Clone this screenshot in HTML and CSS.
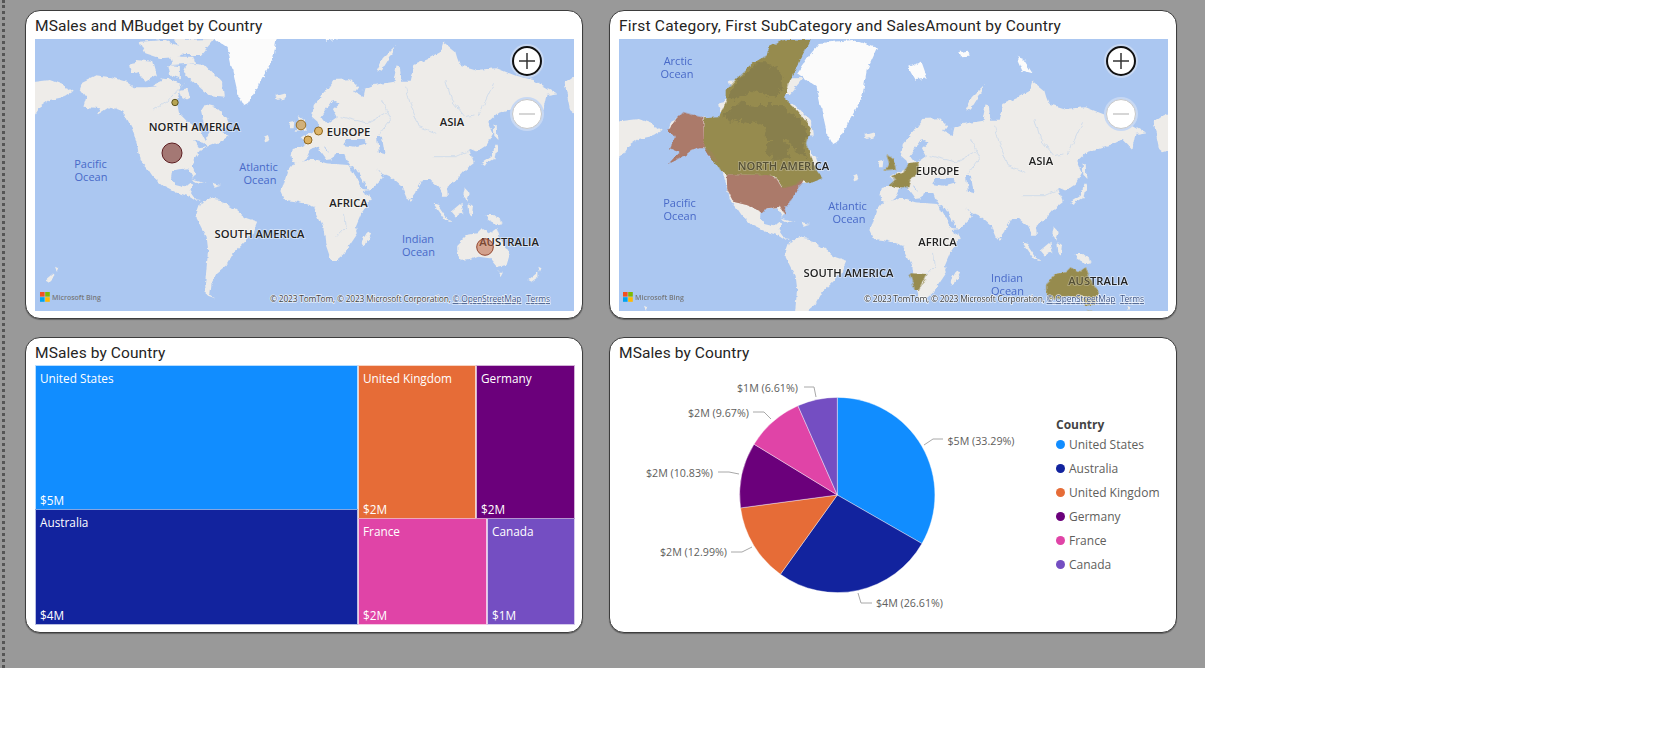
FILE: index.html
```html
<!DOCTYPE html>
<html lang="en">
<head>
<meta charset="utf-8">
<title>Sales report</title>
<link rel="stylesheet" href="styles.css">
</head>
<body>
<svg class="defs" width="0" height="0" aria-hidden="true">
  <defs>
    <filter id="rough" x="-5%" y="-5%" width="110%" height="110%">
      <feTurbulence type="fractalNoise" baseFrequency=".14" numOctaves="3" seed="4" result="n"/>
      <feDisplacementMap in="SourceGraphic" in2="n" scale="5" xChannelSelector="R" yChannelSelector="G"/>
      <feGaussianBlur stdDeviation=".5"/>
    </filter>
    <filter id="terrain" x="-5%" y="-5%" width="110%" height="110%">
      <feTurbulence type="fractalNoise" baseFrequency=".05" numOctaves="3" seed="9" result="n"/>
      <feDisplacementMap in="SourceGraphic" in2="n" scale="30" xChannelSelector="R" yChannelSelector="G"/>
      <feGaussianBlur stdDeviation="2"/>
    </filter>
    <g id="world" class="land">
      <g transform="scale(.38265 .33333)">
        <path d="M60,250 L130,240 L165,255 L190,275 L170,290 L130,300 L105,320 L91,345 L60,370Z"/>
        <path d="M1530,215 L1500,230 L1476,250 L1481,280 L1490,330 L1500,340 L1530,330Z"/>
        <path d="M118,840 L139,820 L139,830 L126,845Z M144,800 L152,805 L148,815Z"/>
        <path d="M215,245 L250,226 L290,232 L330,245 L350,262 L385,262 L420,258 L450,265 L468,280 L462,305 L468,340 L490,365 L520,385 L535,420 L548,395 L532,365 L525,330 L535,312 L565,322 L592,352 L600,378 L572,392 L598,408 L575,425 L548,438 L525,450 L510,475 L503,500 L512,528 L503,530 L492,505 L468,508 L450,512 L447,535 L458,555 L482,562 L498,545 L505,555 L495,572 L510,598 L525,600 L515,605 L495,590 L462,578 L430,560 L400,530 L385,505 L365,480 L357,430 L345,385 L322,335 L287,320 L253,345 L262,325 L218,320 L226,290 L209,265Z"/>
        <path d="M400,255 L440,235 L470,250 L468,280 L420,270Z M470,270 L490,265 L495,290 L478,300Z"/>
        <path d="M490,190 L535,195 L580,250 L585,290 L545,285 L500,240 L480,215Z"/>
        <path d="M355,180 L400,185 L410,225 L380,245 L360,215Z"/>
        <path d="M365,125 L430,120 L490,150 L470,170 L420,175 L380,160Z"/>
        <path d="M455,120 L560,117 L525,165 L480,165Z M445,170 L505,170 L510,190 L450,195Z M340,190 L358,185 L362,215 L345,222Z"/>
        <path d="M440,195 L470,198 L470,235 L445,225Z M418,235 L450,240 L440,250Z M410,150 L440,165 L420,175Z"/>
        <path d="M500,535 L540,548 L520,548Z M555,548 L578,555 L560,560Z M690,410 L700,405 L705,420 L692,425Z"/>
        <path d="M514,640 L523,610 L549,595 L575,600 L610,625 L645,655 L672,665 L658,705 L632,735 L610,760 L592,795 L566,820 L553,850 L549,885 L562,895 L538,885 L536,850 L540,800 L544,750 L540,710 L527,685 L514,655Z"/>
        <path d="M762,470 L765,447 L790,440 L800,428 L785,410 L812,400 L835,385 L830,365 L815,350 L820,315 L850,275 L871,240 L915,238 L936,262 L925,280 L976,255 L1028,245 L1037,195 L1045,205 L1050,245 L1071,245 L1080,195 L1115,178 L1150,155 L1158,125 L1190,155 L1195,175 L1202,195 L1246,210 L1298,205 L1350,228 L1394,240 L1455,280 L1428,285 L1420,330 L1395,300 L1370,315 L1340,325 L1300,340 L1276,365 L1289,400 L1272,435 L1246,455 L1225,445 L1238,490 L1215,510 L1193,540 L1167,560 L1171,590 L1158,590 L1145,560 L1124,540 L1106,540 L1084,580 L1067,605 L1050,560 L1019,530 L998,520 L985,505 L1003,530 L985,550 L965,572 L945,578 L925,530 L915,495 L905,478 L900,462 L880,462 L862,475 L853,448 L845,440 L868,478 L855,480 L830,440 L815,445 L805,470 L785,490 L765,485Z"/>
        <path d="M735,575 L750,520 L770,490 L815,478 L850,490 L910,495 L930,530 L950,580 L972,597 L945,640 L930,680 L935,700 L900,760 L880,780 L865,780 L850,730 L845,680 L820,620 L780,605 L745,600Z"/>
        <path d="M960,695 L970,700 L950,740 L945,725Z"/>
        <path d="M778,345 L795,360 L802,392 L775,395 L785,375Z M758,365 L772,362 L770,385 L755,385Z M720,288 L745,280 L745,295 L725,300Z"/>
        <path d="M1258,490 L1285,470 L1295,430 L1300,440 L1295,475 L1265,495Z M1290,370 L1298,375 L1300,420 L1292,410Z M1000,175 L1035,135 L1020,170 L995,215 L985,210Z"/>
        <path d="M1132,610 L1145,615 L1172,660 L1163,660Z M1172,660 L1189,665 L1172,665Z M1178,635 L1206,608 L1211,640 L1189,650Z M1224,610 L1236,620 L1233,650 L1226,635Z M1267,645 L1289,645 L1317,670 L1298,673 L1276,660Z M1215,565 L1228,580 L1220,605 L1211,580Z M1072,596 L1080,600 L1076,610Z"/>
        <path d="M1195,735 L1220,705 L1246,700 L1259,685 L1280,700 L1298,685 L1307,715 L1333,760 L1324,795 L1298,800 L1280,775 L1250,770 L1228,780 L1202,782 L1195,755Z M1302,815 L1314,815 L1308,828Z"/>
        <path d="M1381,840 L1407,815 L1407,830 L1389,845Z M1407,800 L1415,805 L1411,815Z"/>
        <path class="ice" d="M543,102 L570,57 L603,12 L691,3 L752,27 L726,93 L714,173 L682,243 L648,312 L638,318 L622,282 L604,192 L595,144Z"/>
        <path class="ice" d="M834,83 L869,68 L884,118 L854,123Z M965,40 L990,35 L995,50 L970,52Z M1119,53 L1135,60 L1159,103 L1135,95Z"/>
        <path class="inland" d="M840,350 L870,300 L890,310 L870,330 L880,352 L855,372Z M905,420 L950,420 L960,430 L925,440 L900,435Z M985,410 L998,410 L1005,460 L990,455Z M930,275 L955,265 L950,290Z M505,420 L530,425 L545,440 L520,445Z M915,500 L925,498 L965,572 L950,570Z"/>
        <path class="river" d="M1060,260 L1075,320 L1095,380 L1140,400 M1165,240 L1180,300 L1215,350 L1240,345 M1290,250 L1270,300 L1250,345 M1000,300 L1020,360 L990,405 M900,640 L905,680 L880,710 M890,350 L960,370 L1010,340 M1130,470 L1190,470 L1230,450 M480,250 L440,300 L400,330"/>
      </g>
    </g>
    <g id="ms-logo">
      <rect class="ms-r" width="4.600" height="4.600"/>
      <rect class="ms-g" x="5.200" width="4.600" height="4.600"/>
      <rect class="ms-b" y="5.200" width="4.600" height="4.600"/>
      <rect class="ms-y" x="5.200" y="5.200" width="4.600" height="4.600"/>
    </g>
  </defs>
</svg>

<main class="canvas">
  <section class="card">
    <h2 class="title">MSales and MBudget by Country</h2>
    <div class="map">
      <svg class="map-svg" viewBox="35 39 539 272">
        <rect x="0" y="0" width="620" height="330" class="sea"/>
        <use href="#world"/>
        <text x="194.500" y="130.500" class="place">NORTH AMERICA</text>
        <text x="348.500" y="136" class="place">EUROPE</text>
        <text x="452" y="126" class="place">ASIA</text>
        <text x="348.500" y="207" class="place">AFRICA</text>
        <text x="259.500" y="238" class="place">SOUTH AMERICA</text>
        <text x="509" y="246" class="place">AUSTRALIA</text>
        <text x="90.500" y="168" class="ocean">Pacific</text>
        <text x="91" y="181" class="ocean">Ocean</text>
        <text x="258.500" y="171" class="ocean">Atlantic</text>
        <text x="260" y="184" class="ocean">Ocean</text>
        <text x="418" y="243" class="ocean">Indian</text>
        <text x="418.500" y="256" class="ocean">Ocean</text>
        <circle cx="172" cy="153" r="10" class="b-us"/>
        <circle cx="485" cy="247" r="8.300" class="b-au"/>
        <circle cx="301" cy="125" r="4.800" class="b-uk"/>
        <circle cx="318.500" cy="131" r="4" class="b-de"/>
        <circle cx="308" cy="140" r="4" class="b-fr"/>
        <circle cx="175" cy="102.500" r="3.200" class="b-ca"/>
        <use href="#ms-logo" x="40" y="292"/>
        <text x="52" y="300" class="bing">Microsoft Bing</text>
        <text x="270" y="302" class="credit" textLength="280" lengthAdjust="spacing">© 2023 TomTom, © 2023 Microsoft Corporation, <tspan class="credit-link">© OpenStreetMap</tspan> <tspan dx="3" class="credit-link">Terms</tspan></text>
      </svg>
      <span class="zoom zoom-in"><svg class="zoom-icon" viewBox="0 0 16 16"><path d="M0 8H16M8 0V16"/></svg></span>
      <span class="zoom zoom-out"><svg class="zoom-icon" viewBox="0 0 16 16"><path d="M0 8H16"/></svg></span>
    </div>
  </section>

  <section class="card">
    <h2 class="title title-long">First Category, First SubCategory and SalesAmount by Country</h2>
    <div class="map">
      <svg class="map-svg" viewBox="30 0 549 272">
        <rect x="0" y="-10" width="620" height="330" class="sea"/>
        <use href="#world"/>
        <g class="land">
          <g transform="translate(31 -9) scale(.33333)">
            <path id="us-shape" class="c-us" d="M320,433 L445,435 L470,445 L485,470 L520,465 L548,445 L548,460 L530,480 L515,510 L495,530 L498,555 L488,545 L480,530 L440,535 L425,550 L405,535 L380,525 L340,515 L322,480Z"/>
            <path id="ak-shape" class="c-us" d="M190,245 L250,262 L252,352 L275,365 L295,395 L285,395 L262,370 L252,352 L235,352 L215,360 L200,372 L180,385 L145,402 L165,380 L180,365 L150,355 L165,322 L145,300 L165,270Z"/>
            <path id="ca-shape" class="c-ol" d="M490,30 L572,30 L550,70 L530,110 L510,150 L492,205 L520,230 L550,265 L572,295 L560,340 L575,390 L590,420 L608,445 L570,460 L548,450 L530,465 L490,475 L470,440 L440,435 L320,433 L300,420 L285,395 L252,352 L252,265 L300,262 L320,210 L320,180 L345,150 L400,100 L440,75 L450,50Z"/>
            <path class="c-dark" d="M350,155 L410,100 L440,100 L490,130 L480,190 L440,200 L400,185 L350,205 L325,205Z M310,265 L350,220 L420,225 L480,225 L540,270 L565,310 L550,350 L560,385 L530,365 L500,330 L440,330 L430,290 L380,270 L350,280Z M440,345 L480,325 L510,350 L505,385 L460,392 L438,370Z"/>
          </g>
          <g transform="scale(.38265 .33333)">
            <path id="eu-shape" class="c-ol" d="M778,345 L795,360 L802,392 L775,395 L785,375Z M790,410 L820,402 L835,375 L860,372 L862,400 L840,420 L835,445 L805,445 L785,440 L800,425Z"/>
            <path id="na-shape" class="c-ol" d="M837,703 L884,705 L864,753 L851,753Z"/>
            <path id="au-shape" class="c-ol" d="M1195,735 L1220,705 L1246,700 L1259,685 L1280,700 L1298,685 L1307,715 L1333,760 L1324,795 L1298,800 L1280,775 L1250,770 L1228,780 L1202,782 L1195,755Z M1302,815 L1314,815 L1308,828Z"/>
          </g>
        </g>
        <text x="194.500" y="130.500" class="place">NORTH AMERICA</text>
        <text x="348.500" y="136" class="place">EUROPE</text>
        <text x="452" y="126" class="place">ASIA</text>
        <text x="348.500" y="207" class="place">AFRICA</text>
        <text x="259.500" y="238" class="place">SOUTH AMERICA</text>
        <text x="509" y="246" class="place">AUSTRALIA</text>
        <text x="89" y="26" class="ocean">Arctic</text>
        <text x="88" y="39" class="ocean">Ocean</text>
        <text x="90.500" y="168" class="ocean">Pacific</text>
        <text x="91" y="181" class="ocean">Ocean</text>
        <text x="258.500" y="171" class="ocean">Atlantic</text>
        <text x="260" y="184" class="ocean">Ocean</text>
        <text x="418" y="243" class="ocean">Indian</text>
        <text x="418.500" y="256" class="ocean">Ocean</text>
        <g class="veil">
          <use href="#us-shape" transform="translate(31 -9) scale(.33333)"/>
          <use href="#ak-shape" transform="translate(31 -9) scale(.33333)"/>
        </g>
        <g class="veil veil-ol">
          <use href="#ca-shape" transform="translate(31 -9) scale(.33333)"/>
          <use href="#eu-shape" transform="scale(.38265 .33333)"/>
          <use href="#au-shape" transform="scale(.38265 .33333)"/>
        </g>
        <use href="#ms-logo" x="34" y="253"/>
        <text x="46" y="261" class="bing">Microsoft Bing</text>
        <text x="275" y="263" class="credit" textLength="280" lengthAdjust="spacing">© 2023 TomTom, © 2023 Microsoft Corporation, <tspan class="credit-link">© OpenStreetMap</tspan> <tspan dx="3" class="credit-link">Terms</tspan></text>
      </svg>
      <span class="zoom zoom-in"><svg class="zoom-icon" viewBox="0 0 16 16"><path d="M0 8H16M8 0V16"/></svg></span>
      <span class="zoom zoom-out"><svg class="zoom-icon" viewBox="0 0 16 16"><path d="M0 8H16"/></svg></span>
    </div>
  </section>

  <section class="card">
    <h2 class="title">MSales by Country</h2>
    <div class="treemap">
      <div class="tree-col tree-left">
        <div class="tile t-us tree-us"><span>United States</span><span>$5M</span></div>
        <div class="tile t-au tree-au"><span>Australia</span><span>$4M</span></div>
      </div>
      <div class="tree-col tree-right">
        <div class="tree-row tree-top">
          <div class="tile t-uk tree-uk"><span>United Kingdom</span><span>$2M</span></div>
          <div class="tile t-de tree-de"><span>Germany</span><span>$2M</span></div>
        </div>
        <div class="tree-row tree-bottom">
          <div class="tile t-fr tree-fr"><span>France</span><span>$2M</span></div>
          <div class="tile t-ca tree-ca"><span>Canada</span><span>$1M</span></div>
        </div>
      </div>
    </div>
  </section>

  <section class="card">
    <h2 class="title">MSales by Country</h2>
    <div class="pie-wrap">
      <svg class="pie" viewBox="640 366 410 259">
        <g transform="translate(837.3 495)" class="slices">
          <path class="s-us" d="M0,0 L0,-97.6 A97.6,97.6 0 0 1 84.66,48.57Z"/>
          <path class="s-au" d="M0,0 L84.66,48.57 A97.6,97.6 0 0 1 -56.88,79.31Z"/>
          <path class="s-uk" d="M0,0 L-56.88,79.31 A97.6,97.6 0 0 1 -96.74,12.91Z"/>
          <path class="s-de" d="M0,0 L-96.74,12.91 A97.6,97.6 0 0 1 -83.31,-50.84Z"/>
          <path class="s-fr" d="M0,0 L-83.31,-50.84 A97.6,97.6 0 0 1 -39.38,-89.3Z"/>
          <path class="s-ca" d="M0,0 L-39.38,-89.3 A97.6,97.6 0 0 1 0,-97.6Z"/>
        </g>
        <g class="leaders">
          <path d="M924,445 L933,439 L943,439"/>
          <path d="M858,593 L861,603 L872,603"/>
          <path d="M752,547 L742,552 L731,552"/>
          <path d="M739,474 L729,472 L718,472"/>
          <path d="M771,419 L764,412 L753,412"/>
          <path d="M816,397 L814,387 L804,387"/>
        </g>
        <text x="947.500" y="445" class="pie-label">$5M (33.29%)</text>
        <text x="876" y="607" class="pie-label">$4M (26.61%)</text>
        <text x="660" y="556" class="pie-label">$2M (12.99%)</text>
        <text x="646" y="477" class="pie-label">$2M (10.83%)</text>
        <text x="688" y="417" class="pie-label">$2M (9.67%)</text>
        <text x="737" y="392" class="pie-label">$1M (6.61%)</text>
      </svg>
      <div class="legend">
        <div class="legend-title">Country</div>
        <div class="legend-item"><i class="dot t-us"></i>United States</div>
        <div class="legend-item"><i class="dot t-au"></i>Australia</div>
        <div class="legend-item"><i class="dot t-uk"></i>United Kingdom</div>
        <div class="legend-item"><i class="dot t-de"></i>Germany</div>
        <div class="legend-item"><i class="dot t-fr"></i>France</div>
        <div class="legend-item"><i class="dot t-ca"></i>Canada</div>
      </div>
    </div>
  </section>
</main>
</body>
</html>
```

FILE: styles.css
```css
* { box-sizing: border-box; }
html, body { margin: 0; padding: 0; background: #fff; }
body { width: 1678px; height: 736px; overflow: hidden; font-family: "Open Sans", "Liberation Sans", sans-serif; }
.defs { position: absolute; }

.canvas {
  position: relative;
  width: 1205px;
  height: 668px;
  background: #999;
  display: grid;
  grid-template-columns: 558px 568px;
  grid-template-rows: 309px 296px;
  column-gap: 26px;
  row-gap: 18px;
  padding: 10px 0 0 25px;
}
.canvas::before {
  content: "";
  position: absolute;
  left: 2px;
  top: 0;
  bottom: 0;
  border-left: 3px dotted #555;
}

.card {
  background: #fff;
  border: 1px solid #3d3d3d;
  border-radius: 15px;
  box-shadow: 0 1px 1px rgba(0,0,0,.35);
  padding: 0 8px 0 9px;
  min-width: 0;
}
.title {
  margin: 0;
  height: 28px;
  font-family: Roboto, "Liberation Sans", sans-serif;
  font-weight: 400;
  font-size: 15.5px;
  letter-spacing: .1px;
  line-height: 30px;
  color: #252423;
  white-space: nowrap;
}
.title-long { letter-spacing: .22px; }

.map { position: relative; height: 272px; overflow: hidden; }
.map-svg { display: block; width: 100%; height: 100%; }
.sea { fill: #abc7f1; }
.land { fill: #eeece9; filter: url(#rough); }
.ice { fill: #fbfbfb; }
.inland { fill: #abc7f1; }
.river { fill: none; stroke: #c6d6ec; stroke-width: 2; }
.place { font: 600 11.2px "Open Sans", sans-serif; fill: #222; text-anchor: middle; paint-order: stroke; stroke: rgba(255,255,255,.55); stroke-width: 1.5px; }
.ocean { font: 400 11px "Open Sans", sans-serif; fill: #4869c8; text-anchor: middle; }
.bing { font: 600 7px "Open Sans", sans-serif; fill: #77797c; }
.credit { font: 400 8.5px "Open Sans", sans-serif; fill: #444; paint-order: stroke; stroke: rgba(255,255,255,.75); stroke-width: 1.4px; }
.credit-link { text-decoration: underline; fill: #3e5688; }
.ms-r { fill: #f25022; }
.ms-g { fill: #7fba00; }
.ms-b { fill: #00a4ef; }
.ms-y { fill: #ffb900; }

.b-us { fill: rgba(150,100,95,.85); stroke: #5c1c20; stroke-width: 1; }
.b-au { fill: rgba(190,100,65,.55); stroke: #93452d; stroke-width: 1; }
.b-uk { fill: rgba(205,170,110,.9); stroke: #9a6f25; stroke-width: 1; }
.b-de { fill: #ddb56a; stroke: #8f6820; stroke-width: 1; }
.b-fr { fill: #dcb162; stroke: #8f6820; stroke-width: 1; }
.b-ca { fill: #b7a452; stroke: #5f5520; stroke-width: 1; }

.c-us { fill: #ab7a6b; }
.c-ol { fill: #978c50; }
.c-dark { fill: #7d764b; filter: url(#terrain); }
.veil { opacity: .45; fill: #ab7a6b; }
.veil-ol { fill: #978c50; }

.zoom {
  position: absolute;
  right: 32px;
  width: 30px;
  height: 30px;
  border-radius: 50%;
  background: #fff;
  display: flex;
  align-items: center;
  justify-content: center;
  box-shadow: 0 0 0 2px #c7d8f3;
}
.zoom-in { top: 7px; border: 2px solid #111; }
.zoom-out { top: 60px; border: 1px solid #c8c8c8; }
.zoom-icon { width: 16px; height: 16px; fill: none; stroke: #333; stroke-width: 1.500; }
.zoom-out .zoom-icon { stroke: #c8c8c8; }

.treemap { display: flex; gap: 2px; height: 258px; padding-left: 1px; }
.tree-col { display: flex; flex-direction: column; gap: 1px; }
.tree-left { width: 321px; }
.tree-right { width: 215px; }
.tree-row { display: flex; gap: 2px; }
.tree-us { height: 143px; }
.tree-au { height: 114px; }
.tree-top { height: 152px; }
.tree-bottom { height: 105px; }
.tree-uk { width: 116px; }
.tree-de { width: 97px; }
.tree-fr { width: 127px; }
.tree-ca { width: 86px; }
.tile {
  display: flex;
  flex-direction: column;
  justify-content: space-between;
  padding: 3px 4px 0 4px;
  color: #fff;
  font-size: 11.8px;
  line-height: 18px;
  white-space: nowrap;
}
.t-us { background: #118dff; }
.t-au { background: #12239e; }
.t-uk { background: #e66c37; }
.t-de { background: #6b007b; }
.t-fr { background: #e044a7; }
.t-ca { background: #744ec2; }
.tile.t-us { box-shadow: 0 0 0 1px rgba(17,141,255,.3); }
.tile.t-au { box-shadow: 0 0 0 1px rgba(18,35,158,.3); }
.tile.t-uk { box-shadow: 0 0 0 1px rgba(230,108,55,.3); }
.tile.t-de { box-shadow: 0 0 0 1px rgba(107,0,123,.3); }
.tile.t-fr { box-shadow: 0 0 0 1px rgba(224,68,167,.3); }
.tile.t-ca { box-shadow: 0 0 0 1px rgba(116,78,194,.3); }

.pie-wrap { display: flex; height: 259px; }
.pie { width: 410px; height: 259px; margin-left: 21px; flex: none; }
.s-us { fill: #118dff; }
.s-au { fill: #12239e; }
.s-uk { fill: #e66c37; }
.s-de { fill: #6b007b; }
.s-fr { fill: #e044a7; }
.s-ca { fill: #744ec2; }
.slices path { stroke: #fff; stroke-width: .4; }
.leaders path { fill: none; stroke: #a8a8a8; stroke-width: 1; }
.pie-label { font: 400 10.700px "Open Sans", sans-serif; fill: #605e5c; }

.legend { margin: 51px 0 0 6px; font-size: 12px; color: #605e5c; }
.legend-title { height: 15px; line-height: 15px; font-weight: 700; color: #444; }
.legend-item { display: flex; align-items: center; gap: 4px; height: 24px; white-space: nowrap; }
.dot { width: 9px; height: 9px; border-radius: 50%; flex: none; }
```
